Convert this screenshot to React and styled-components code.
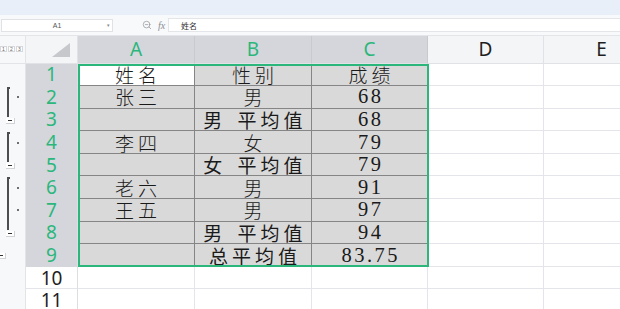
import styled, { createGlobalStyle } from 'styled-components';
import { ZoomOut } from 'lucide-react';

const GREEN = '#2bb67c';
const SEL_BG = '#d4d6db';
const TRACKS = `
  grid-template-columns: 26px 52px 117px 117px 116px 116px 116px;
  grid-template-rows: 27.5px repeat(11, 22.6px);
`;

const columns = [
  { key: 'A', selected: true },
  { key: 'B', selected: true },
  { key: 'C', selected: true },
  { key: 'D', selected: false },
  { key: 'E', selected: false },
];

// outline kind for each row: start / mid / end / total / none
const rows = [
  { n: 1, outline: 'none', cells: ['姓名', '性别', '成绩'] },
  { n: 2, outline: 'start', cells: ['张三', '男', '68'] },
  { n: 3, outline: 'end', cells: ['', '男 平均值', '68'], bold: true },
  { n: 4, outline: 'start', cells: ['李四', '女', '79'] },
  { n: 5, outline: 'end', cells: ['', '女 平均值', '79'], bold: true },
  { n: 6, outline: 'start', cells: ['老六', '男', '91'] },
  { n: 7, outline: 'mid', cells: ['王五', '男', '97'] },
  { n: 8, outline: 'end', cells: ['', '男 平均值', '94'], bold: true },
  { n: 9, outline: 'total', cells: ['', '总平均值', '83.75'], bold: true },
  { n: 10, outline: 'none', cells: null },
  { n: 11, outline: 'none', cells: null },
];

function Outline({ kind }) {
  if (kind === 'total') {
    return (
      <OutlineCell $kind={kind}>
        <MinusBox $edge><Dash /></MinusBox>
      </OutlineCell>
    );
  }
  if (kind === 'none') return <OutlineCell $kind={kind} />;
  return (
    <OutlineCell $kind={kind}>
      <Track>
        {kind === 'end' ? (
          <>
            <Line $short />
            <MinusBox><Dash /></MinusBox>
          </>
        ) : (
          <Line $start={kind === 'start'} />
        )}
      </Track>
      {kind !== 'end' && <Dot />}
    </OutlineCell>
  );
}

export default function App() {
  return (
    <>
      <GlobalStyle />
      <Window>
        <TopBand />
        <FormulaBar>
          <NameBox>
            <span>A1</span>
            <Caret>▾</Caret>
          </NameBox>
          <BarIcons>
            <ZoomOut size={10} strokeWidth={1.6} color="#8a8d93" />
            <Fx>fx</Fx>
          </BarIcons>
          <FormulaInput>姓名</FormulaInput>
        </FormulaBar>
        <SheetStack>
          <Sheet>
            <LevelButtons>
              <LevelBtn>1</LevelBtn>
              <LevelBtn>2</LevelBtn>
              <LevelBtn>3</LevelBtn>
            </LevelButtons>
            <Corner>
              <Triangle />
            </Corner>
            {columns.map((c) => (
              <ColHead key={c.key} $selected={c.selected}>{c.key}</ColHead>
            ))}

            {rows.map((r) => (
              <Row key={r.n}>
                <Outline kind={r.outline} />
                <RowHead $selected={!!r.cells}>{r.n}</RowHead>
                {r.cells ? (
                  r.cells.map((text, i) => (
                    <DataCell
                      key={i}
                      $active={r.n === 1 && i === 0}
                      $bold={r.bold && i === 1}
                      $num={i === 2 && r.n > 1}
                    >
                      {text}
                    </DataCell>
                  ))
                ) : (
                  <>
                    <EmptyCell />
                    <EmptyCell />
                    <EmptyCell />
                  </>
                )}
                <EmptyCell />
                <EmptyCell />
              </Row>
            ))}
          </Sheet>
          <SelectionLayer>
            <Selection />
          </SelectionLayer>
        </SheetStack>
      </Window>
    </>
  );
}

const GlobalStyle = createGlobalStyle`
  html, body {
    margin: 0;
    padding: 0;
    background: #ffffff;
    overflow: hidden;
  }
  * {
    box-sizing: border-box;
  }
`;

const Window = styled.div`
  width: 620px;
  height: 309px;
  overflow: hidden;
  display: flex;
  flex-direction: column;
  font-family: "Noto Sans", "Noto Sans CJK SC", sans-serif;
`;

const TopBand = styled.div`
  height: 15px;
  flex: none;
  background: #e9eff9;
`;

const FormulaBar = styled.div`
  height: 21px;
  flex: none;
  display: flex;
  align-items: center;
  background: #f8f9fb;
  border-bottom: 1px solid #e3e5e9;
  padding-left: 1px;
`;

const NameBox = styled.div`
  width: 112px;
  height: 13px;
  background: #ffffff;
  border: 1px solid #e0e2e6;
  display: flex;
  align-items: center;
  justify-content: center;
  position: relative;
  font-family: "Liberation Sans", sans-serif;
  font-size: 7px;
  color: #555;
`;

const Caret = styled.span`
  position: absolute;
  right: 2px;
  font-size: 5px;
  color: #888;
`;

const BarIcons = styled.div`
  display: flex;
  align-items: center;
  gap: 6px;
  margin-left: 29px;
  width: 26px;
`;

const Fx = styled.span`
  font-family: "Liberation Serif", serif;
  font-style: italic;
  font-size: 10px;
  color: #8a8d93;
`;

const FormulaInput = styled.div`
  flex: 1;
  height: 14px;
  background: #ffffff;
  border: 1px solid #e3e5e9;
  border-right: none;
  display: flex;
  align-items: center;
  padding-left: 12px;
  font-family: "Noto Sans CJK SC", sans-serif;
  font-size: 8px;
  color: #333;
`;

const SheetStack = styled.div`
  display: grid;
  & > * {
    grid-area: 1 / 1;
  }
`;

const Sheet = styled.div`
  display: grid;
  ${TRACKS}
`;

const SelectionLayer = styled.div`
  display: grid;
  ${TRACKS}
  pointer-events: none;
  z-index: 1;
`;

const Selection = styled.div`
  grid-column: 3 / 6;
  grid-row: 2 / 11;
  border: 2px solid ${GREEN};
  margin-right: -1px;
`;

const Row = styled.div`
  display: contents;
`;

const LevelButtons = styled.div`
  background: #f7f8fa;
  border-right: 1px solid #e2e4e8;
  border-bottom: 1px solid #e2e4e8;
  display: flex;
  align-items: center;
  gap: 1px;
`;

const LevelBtn = styled.div`
  width: 7px;
  height: 6px;
  border: 1px solid #d5d7db;
  background: #fff;
  font-family: "Liberation Sans", sans-serif;
  font-size: 5px;
  line-height: 4px;
  text-align: center;
  color: #666;
`;

const Corner = styled.div`
  background: #f4f5f7;
  border-right: 1px solid #e0e2e6;
  border-bottom: 1px solid #e0e2e6;
  display: flex;
  align-items: flex-end;
  justify-content: flex-end;
  padding: 0 7px 6px 0;
`;

const Triangle = styled.div`
  width: 0;
  height: 0;
  border-left: 18px solid transparent;
  border-bottom: 14px solid #c6c8cc;
`;

const ColHead = styled.div`
  display: flex;
  align-items: center;
  justify-content: center;
  font-size: 19px;
  background: ${(p) => (p.$selected ? SEL_BG : '#f4f5f7')};
  color: ${(p) => (p.$selected ? GREEN : '#1f1f1f')};
  border-right: 1px solid ${(p) => (p.$selected ? '#c8cace' : '#e0e2e6')};
  border-bottom: 1px solid #e0e2e6;
`;

const OutlineCell = styled.div`
  display: flex;
  align-items: ${(p) => (p.$kind === 'total' ? 'center' : 'stretch')};
  padding-left: ${(p) => (p.$kind === 'total' ? 0 : 7)}px;
  background: #f7f8fa;
  border-right: 1px solid #e2e4e8;
`;

const Track = styled.div`
  width: 9px;
  display: flex;
  flex-direction: column;
  align-items: flex-start;
`;

const Line = styled.div`
  width: ${(p) => (p.$start ? 3 : 2)}px;
  flex: ${(p) => (p.$short ? 'none' : 1)};
  height: ${(p) => (p.$short ? '8.5px' : 'auto')};
  border-left: 2px solid #4b4d50;
  border-top: ${(p) => (p.$start ? '2px solid #4b4d50' : 'none')};
  margin-top: ${(p) => (p.$start ? 1 : 0)}px;
`;

const MinusBox = styled.div`
  width: 9px;
  height: 6px;
  margin-left: ${(p) => (p.$edge ? -3 : -1)}px;
  margin-top: ${(p) => (p.$edge ? 0 : 1)}px;
  background: #ffffff;
  border-right: 1px solid #d0d2d6;
  border-bottom: 1px solid #d0d2d6;
  display: flex;
  align-items: center;
  justify-content: center;
`;

const Dash = styled.div`
  width: 4px;
  height: 1px;
  background: #333;
`;

const Dot = styled.div`
  width: 2px;
  height: 2px;
  background: #6d6f73;
  align-self: center;
  margin-left: 1px;
`;

const RowHead = styled.div`
  display: flex;
  align-items: center;
  justify-content: center;
  font-size: 19px;
  background: ${(p) => (p.$selected ? SEL_BG : '#ffffff')};
  color: ${(p) => (p.$selected ? GREEN : '#1f1f1f')};
  border-bottom: 1px solid ${(p) => (p.$selected ? SEL_BG : '#e3e5ea')};
  border-right: 1px solid #dcdee2;
`;

const DataCell = styled.div`
  display: flex;
  align-items: center;
  justify-content: center;
  background: ${(p) => (p.$active ? '#ffffff' : '#d9d9d9')};
  border-right: 1px solid #858585;
  border-bottom: 1px solid #858585;
  color: #1a1a1a;
  font-family: ${(p) => (p.$num ? '"Liberation Serif", serif' : '"Noto Sans CJK SC", sans-serif')};
  font-size: ${(p) => (p.$num ? 20.5 : 19)}px;
  font-weight: ${(p) => (p.$bold ? 400 : 300)};
  letter-spacing: ${(p) => (p.$num ? 2.5 : 4)}px;
  word-spacing: 3px;
  padding-left: ${(p) => (p.$num ? 2.5 : 4)}px;
  white-space: pre;
`;

const EmptyCell = styled.div`
  background: #ffffff;
  border-right: 1px solid #e3e5ea;
  border-bottom: 1px solid #e3e5ea;
`;
